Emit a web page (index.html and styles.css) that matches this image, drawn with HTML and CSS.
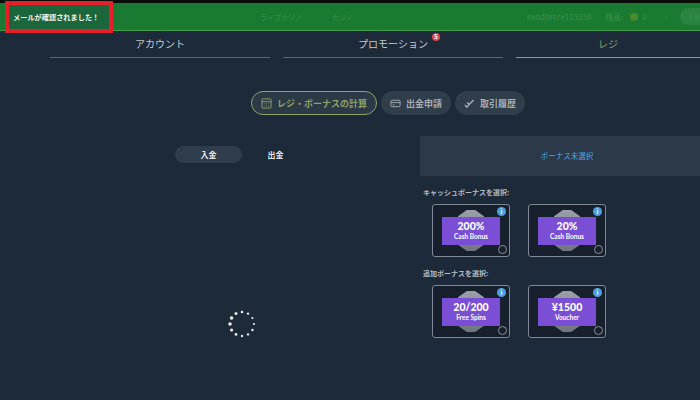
FILE: index.html
```html
<!DOCTYPE html>
<html lang="ja">
<head>
<meta charset="utf-8">
<link rel="stylesheet" href="styles.css">
</head>
<body>

<!-- Top bar -->
<header class="topbar">
  <div class="brand">
    <svg class="logo" viewBox="0 0 72 14"><path d="M13 4h9M13 7h9M13 10h9M50 13l6-11M55 13l6-11M60 13l6-11M65 13l6-11"/></svg>
  </div>
  <nav class="topnav">
    <span>ライブカジノ</span>
    <span>カジノ</span>
  </nav>
  <div class="account">
    <span class="username">exodorer#123238</span>
    <span class="balance">残高:</span>
    <span class="coin"></span>
    <span class="balance">0</span>
    <span class="chevron">›</span>
    <span class="deposit">入金</span>
  </div>
</header>

<!-- Toast, highlighted in red -->
<div class="toast">メールが確認されました！</div>

<!-- Tabs -->
<div class="tabs">
  <div class="tab">アカウント</div>
  <div class="tab">プロモーション<span class="badge">5</span></div>
  <div class="tab active">レジ</div>
</div>

<!-- Sub menu -->
<div class="submenu">
  <div class="pill selected">
    <svg class="icon" viewBox="0 0 12 12"><rect x="1" y="1" width="10" height="10" rx="1"/><path d="M1 4h10M3 6.300h1M5.500 6.300h1M8 6.300h1M3 8.700h1M5.500 8.700h1M8 8.700h1"/></svg>
    レジ・ボーナスの計算
  </div>
  <div class="pill">
    <svg class="icon" viewBox="0 0 12 12"><rect x="1" y="2.500" width="10" height="7" rx="1"/><path d="M1 5h10M3 7.500h2"/></svg>
    出金申請
  </div>
  <div class="pill">
    <svg class="icon thick" viewBox="0 0 12 12"><path d="M1 7.500l2 2.500 7-7.500M3.500 5l2 2 5-4.500"/></svg>
    取引履歴
  </div>
</div>

<main class="content">
  <section class="cashier">
    <div class="switch">
      <div class="switch-item on">入金</div>
      <div class="switch-item">出金</div>
    </div>
    <div class="spinner-wrap">
      <svg class="spinner" viewBox="0 0 32 32">
        <circle cx="16" cy="4" r="1.300"/>
        <circle cx="22" cy="5.600" r="1.200"/>
        <circle cx="26.400" cy="10" r="1.100"/>
        <circle cx="28" cy="16" r="1.100"/>
        <circle cx="26.400" cy="22" r="1.200"/>
        <circle cx="22" cy="26.400" r="1.200"/>
        <circle cx="16" cy="28" r="1.200"/>
        <circle cx="10" cy="26.400" r="1.400"/>
        <circle cx="5.600" cy="22" r="1.600"/>
        <circle cx="4" cy="16" r="1.800"/>
        <circle cx="5.600" cy="10" r="1.800"/>
        <circle cx="10" cy="5.600" r="1.500"/>
      </svg>
    </div>
  </section>

  <section class="bonus">
    <div class="no-bonus">ボーナス未選択</div>

    <div class="bonus-label">キャッシュボーナスを選択:</div>
    <div class="cards">
      <div class="card">
        <div class="hexagon"></div>
        <div class="ticket"><b>200%</b><span>Cash Bonus</span></div>
        <div class="info">i</div>
        <div class="radio"></div>
      </div>
      <div class="card">
        <div class="hexagon"></div>
        <div class="ticket"><b>20%</b><span>Cash Bonus</span></div>
        <div class="info">i</div>
        <div class="radio"></div>
      </div>
    </div>

    <div class="bonus-label">追加ボーナスを選択:</div>
    <div class="cards">
      <div class="card">
        <div class="hexagon"></div>
        <div class="ticket"><b>20/200</b><span>Free Spins</span></div>
        <div class="info">i</div>
        <div class="radio"></div>
      </div>
      <div class="card">
        <div class="hexagon"></div>
        <div class="ticket"><b>¥1500</b><span>Voucher</span></div>
        <div class="info">i</div>
        <div class="radio"></div>
      </div>
    </div>
  </section>
</main>

</body>
</html>
```

FILE: styles.css
```css
body {
  margin: 0;
  width: 700px;
  height: 400px;
  overflow: hidden;
  position: relative;
  background: #1d2a39;
  font-family: "Noto Sans CJK JP", "Noto Sans", sans-serif;
  color: #c9ced3;
}

/* Top bar */
.topbar {
  height: 27px;
  border-top: 3px solid #0b0d0b;
  border-bottom: 1px solid #3f9d4c;
  background: #1b7a31;
  display: flex;
  align-items: center;
  font-size: 7px;
  color: #37934f;
}

.brand {
  flex: none;
  width: 260px;
  display: flex;
}

.logo {
  width: 72px;
  height: 14px;
  fill: none;
  stroke: #4f9c5f;
  stroke-width: 1;
}

.topnav {
  display: flex;
  gap: 30px;
}

.account {
  display: flex;
  align-items: center;
  margin-left: auto;
  width: 173px;
  flex: none;
  font-size: 8px;
}

.username {
  width: 78px;
}

.balance {
  margin-right: 4px;
}

.coin {
  width: 8px;
  height: 8px;
  margin: 0 4px 0 3px;
  border-radius: 50%;
  background: #4c8a2e;
}

.chevron {
  margin-left: 14px;
}

.deposit {
  margin-left: auto;
  padding: 4px 0 4px 8px;
  width: 12px;
  font-size: 6px;
  white-space: nowrap;
  border-radius: 10px 0 0 10px;
  background: #2a8340;
}

/* Toast with the red box drawn round it */
.toast {
  position: absolute;
  left: 5px;
  top: 1px;
  width: 96px;
  height: 24px;
  border: 4px solid #e4202b;
  background: rgba(28, 100, 60, 0.9);
  color: #f2f5f2;
  font-size: 7.200px;
  font-weight: 700;
  line-height: 24px;
  padding-left: 4px;
}

/* Tabs */
.tabs {
  display: grid;
  grid-template-columns: 220px 220px 1fr;
  column-gap: 13px;
  padding-left: 50px;
  height: 27px;
}

.tab {
  position: relative;
  text-align: center;
  font-size: 10px;
  line-height: 25px;
  border-bottom: 1px solid #5a6775;
  color: #c4c9cf;
}

.tab.active {
  color: #8ea368;
  border-bottom-color: #8ea368;
}

.badge {
  position: absolute;
  margin-left: 4px;
  top: 2px;
  width: 8px;
  height: 8px;
  border-radius: 50%;
  background: #e0474c;
  color: #fff;
  font-size: 6px;
  font-weight: 700;
  line-height: 8px;
  text-align: center;
}

/* Sub menu */
.submenu {
  display: flex;
  gap: 4px;
  margin: 33px 0 0 251px;
}

.pill {
  display: flex;
  align-items: center;
  gap: 5px;
  height: 24px;
  padding: 0 9px;
  border-radius: 12px;
  background: #303d4b;
  color: #a6adb5;
  font-size: 9px;
  font-weight: 700;
}

.pill.selected {
  height: 22px;
  border: 1px solid #8ea368;
  background: #2b3a46;
  color: #8ea368;
}

.icon {
  width: 11px;
  height: 11px;
  fill: none;
  stroke: currentColor;
  stroke-width: 1;
}

.icon.thick {
  stroke-width: 1.500;
}

/* Main columns */
.content {
  display: grid;
  grid-template-columns: 420px 280px;
  margin-top: 21px;
}

.switch {
  display: flex;
  margin: 10px 0 0 175px;
}

.switch-item {
  width: 67px;
  height: 17px;
  border-radius: 9px;
  color: #e6e9eb;
  text-align: center;
  font-size: 8px;
  font-weight: 700;
  line-height: 17px;
}

.switch-item.on {
  background: #2f3d4d;
}

.spinner-wrap {
  display: flex;
  justify-content: center;
  padding: 145px 0 0 63px;
}

.spinner {
  width: 32px;
  height: 32px;
  fill: #e8ecef;
}

/* Bonus column */
.no-bonus {
  height: 40px;
  padding-left: 14px;
  background: #2c3948;
  color: #4fa3e8;
  font-size: 7.500px;
  line-height: 40px;
  text-align: center;
}

.bonus-label {
  margin: 10px 0 0 3px;
  height: 12px;
  font-size: 7px;
  font-weight: 700;
  line-height: 12px;
  color: #b4bac1;
}

.cards {
  display: flex;
  gap: 18px;
  margin: 6px 0 0 12px;
}

.card {
  position: relative;
  display: flex;
  align-items: center;
  justify-content: center;
  width: 76px;
  height: 51px;
  border: 1px solid #7d8894;
  border-radius: 3px;
  background: #17212d;
  overflow: hidden;
}

.hexagon {
  position: absolute;
  left: 25px;
  top: 5px;
  width: 26px;
  height: 41px;
  background: linear-gradient(#9aa0a8, #6f7680);
  clip-path: polygon(34% 0, 66% 0, 100% 15%, 100% 85%, 66% 100%, 34% 100%, 0 85%, 0 15%);
}

.ticket {
  position: relative;
  display: flex;
  flex-direction: column;
  align-items: center;
  justify-content: center;
  width: 58px;
  height: 28px;
  background: #7a4fd6;
  color: #fff;
  font-family: "Lato", sans-serif;
  font-weight: 700;
}

.ticket b {
  font-size: 10.500px;
  line-height: 13px;
}

.ticket span {
  font-size: 6.500px;
  line-height: 8px;
}

.info {
  position: absolute;
  right: 3px;
  top: 2px;
  width: 9px;
  height: 9px;
  border-radius: 50%;
  background: #4f9fde;
  color: #fff;
  font-size: 6px;
  font-weight: 700;
  line-height: 9px;
  text-align: center;
}

.radio {
  position: absolute;
  right: 2px;
  bottom: 2px;
  width: 7px;
  height: 7px;
  border: 1px solid #8b929b;
  border-radius: 50%;
}
```
